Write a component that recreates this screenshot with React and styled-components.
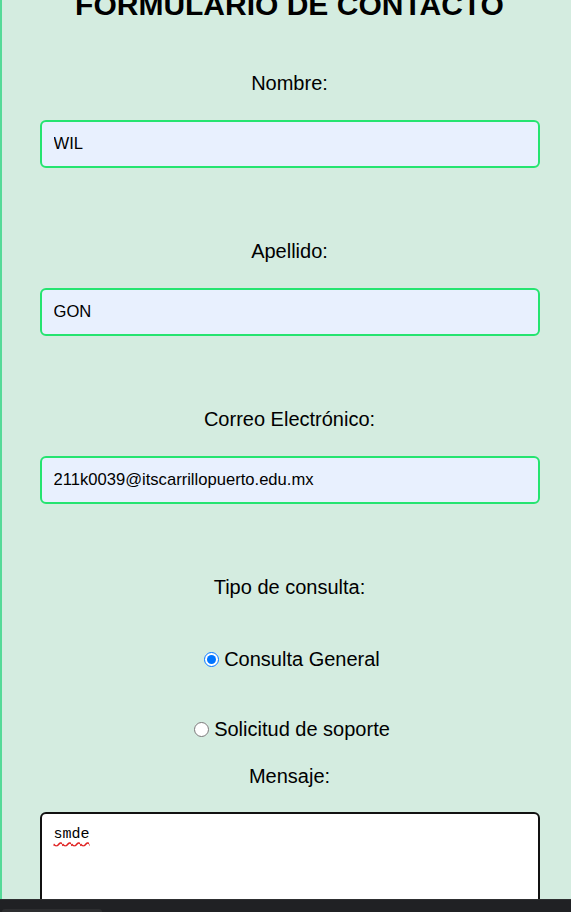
import React, { useState } from "react";
import styled, { createGlobalStyle } from "styled-components";

const GlobalStyle = createGlobalStyle`
  html, body {
    margin: 0;
    padding: 0;
    background: #d4ece0;
    font-family: "Liberation Sans", Arial, sans-serif;
  }
`;

const Viewport = styled.div`
  height: 912px;
  display: flex;
  flex-direction: column;
  overflow: hidden;
`;

const Scroller = styled.div`
  flex: 1;
  overflow: hidden;
`;

const Container = styled.div`
  background-color: #d4ece0;
  border-left: 2px solid #55da98;
  padding-left: 6px;
  margin-top: -12px;
  min-height: 1200px;
`;

const Title = styled.h1`
  margin: 0;
  font-size: 30px;
  font-weight: bold;
  text-align: center;
  color: #000;
`;

const Form = styled.form`
  display: flex;
  flex-direction: column;
  align-items: center;
  padding-top: 50px;
`;

const Label = styled.label`
  display: block;
  font-size: 20px;
  color: #000;
  text-align: center;
  margin-bottom: ${(p) => p.$gap || 25}px;
`;

const Input = styled.input`
  box-sizing: border-box;
  width: 500px;
  height: 48px;
  padding: 0 12px;
  border: 2px solid #25e470;
  border-radius: 6px;
  background: #e8f0fe;
  font-family: "Liberation Sans", Arial, sans-serif;
  font-size: 16.6px;
  color: #000;
  margin-bottom: 72px;
  outline: none;
`;

const RadioRow = styled.label`
  display: flex;
  align-items: center;
  font-size: 20px;
  color: #000;
  height: 23px;
  margin-bottom: ${(p) => p.$gap}px;
`;

const Radio = styled.input`
  width: 15px;
  height: 15px;
  margin: 0 5px 0 5px;
  accent-color: #0075ff;
`;

const TextArea = styled.textarea`
  box-sizing: border-box;
  width: 500px;
  height: 140px;
  padding: 12px;
  border: 2px solid #111;
  border-radius: 6px;
  background: #fff;
  font-family: "Liberation Mono", "DejaVu Sans Mono", monospace;
  font-size: 15px;
  color: #000;
  resize: none;
  outline: none;
  text-decoration: underline wavy #e02020;
  text-underline-offset: 3px;
`;

const Taskbar = styled.div`
  height: 12px;
  flex-shrink: 0;
  background: #202124;
  border-top: 1px solid #2e2f31;
  display: flex;
  align-items: flex-end;
  padding-left: 2px;
`;

const TaskTab = styled.div`
  width: 100px;
  height: 3px;
  background: #2d2e30;
  border-radius: 4px 4px 0 0;
`;

export default function App() {
  const [tipo, setTipo] = useState("general");
  return (
    <>
      <GlobalStyle />
      <Viewport>
        <Scroller>
          <Container>
            <Title>FORMULARIO DE CONTACTO</Title>
            <Form onSubmit={(e) => e.preventDefault()}>
              <Label htmlFor="nombre">Nombre:</Label>
              <Input id="nombre" defaultValue="WIL" />
              <Label htmlFor="apellido">Apellido:</Label>
              <Input id="apellido" defaultValue="GON" />
              <Label htmlFor="correo">Correo Electrónico:</Label>
              <Input id="correo" type="email" defaultValue="211k0039@itscarrillopuerto.edu.mx" />
              <Label $gap={49}>Tipo de consulta:</Label>
              <RadioRow $gap={47}>
                <Radio
                  type="radio"
                  name="tipo"
                  checked={tipo === "general"}
                  onChange={() => setTipo("general")}
                />
                Consulta General
              </RadioRow>
              <RadioRow $gap={24}>
                <Radio
                  type="radio"
                  name="tipo"
                  checked={tipo === "soporte"}
                  onChange={() => setTipo("soporte")}
                />
                Solicitud de soporte
              </RadioRow>
              <Label htmlFor="mensaje" $gap={24}>Mensaje:</Label>
              <TextArea id="mensaje" defaultValue="smde" spellCheck />
            </Form>
          </Container>
        </Scroller>
        <Taskbar>
          <TaskTab />
        </Taskbar>
      </Viewport>
    </>
  );
}
